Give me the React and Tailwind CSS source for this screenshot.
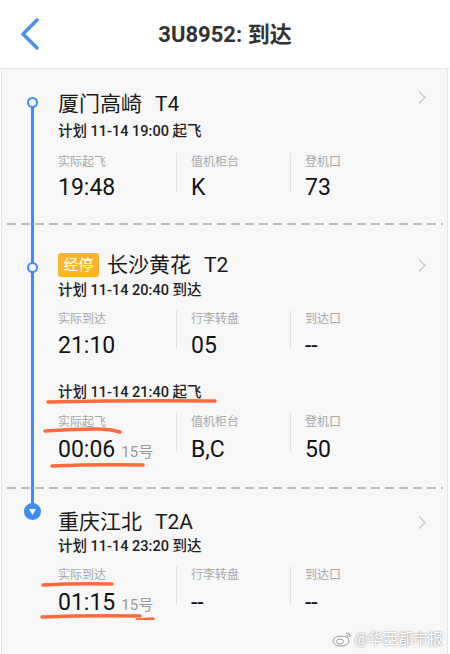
import React from "react";

// 航班详情：经停站时间线
const SEGMENT_1 = [
  { label: "实际起飞", value: "19:48" },
  { label: "值机柜台", value: "K" },
  { label: "登机口", value: "73" },
];

const SEGMENT_2A = [
  { label: "实际到达", value: "21:10" },
  { label: "行李转盘", value: "05" },
  { label: "到达口", value: "--" },
];

const SEGMENT_2B = [
  { label: "实际起飞", value: "00:06", day: "15号" },
  { label: "值机柜台", value: "B,C" },
  { label: "登机口", value: "50" },
];

const SEGMENT_3 = [
  { label: "实际到达", value: "01:15", day: "15号" },
  { label: "行李转盘", value: "--" },
  { label: "到达口", value: "--" },
];

const TitleRow = ({ name, term, tag, chevronClass = "" }) => (
  <div className="flex items-center h-[28px]">
    {tag && (
      <span className="mr-[8px] h-[24px] w-[41px] shrink-0 rounded-[3px] bg-[#fcb42c] text-white text-[15px] leading-[24px] text-center">
        {tag}
      </span>
    )}
    <span className="text-[21px] leading-[28px] text-[#1a1a1a]">{name}</span>
    <span className="ml-[13px] text-[21px] leading-[28px] text-[#1a1a1a]">{term}</span>
    <svg
      className={`ml-auto ${chevronClass}`}
      width="10"
      height="15"
      viewBox="0 0 10 15"
    >
      <polyline
        points="2,1.5 8,7.5 2,13.5"
        fill="none"
        stroke="#c9ced4"
        strokeWidth="1.5"
      />
    </svg>
  </div>
);

const Plan = ({ children, className = "" }) => (
  <p className={`text-[14.5px] leading-[20px] font-medium text-[#222] ${className}`}>
    {children}
  </p>
);

const InfoRow = ({ cols, className = "", valueGap = "mt-[3px]" }) => (
  <div className={`flex ${className}`}>
    {cols.map((c, i) => (
      <React.Fragment key={c.label}>
        {i > 0 && <div className="w-px h-[39px] bg-[#e2e2e2]" />}
        <div className={i === 0 ? "w-[118px]" : "w-[113px] pl-[14px]"}>
          <div className="text-[12px] leading-[18px] text-[#a8a8a8]">{c.label}</div>
          <div
            className={`${valueGap} flex items-baseline text-[23px] leading-[30px] text-[#141414]`}
          >
            {c.value}
            {c.day && (
              <span className="ml-[6px] text-[15px] text-[#9a9a9a]">{c.day}</span>
            )}
          </div>
        </div>
      </React.Fragment>
    ))}
  </div>
);

const Dashed = ({ className = "" }) => (
  <div
    className={`ml-[5px] mr-[4px] h-[2px] bg-[repeating-linear-gradient(90deg,#bdbdbd_0_9px,transparent_9px_14px)] ${className}`}
  />
);

const Marks = ({ children }) => (
  <svg
    className="absolute inset-0 z-20 pointer-events-none"
    width="100%"
    height="100%"
    fill="none"
    stroke="#ff6a3d"
    strokeWidth="3.5"
    strokeLinecap="round"
    strokeLinejoin="round"
  >
    {children}
  </svg>
);

export default function App() {
  return (
    <div className="w-[450px] h-[654px] overflow-hidden bg-white flex flex-col font-[family-name:Roboto,'Noto_Sans_CJK_SC',sans-serif]">
      {/* Header */}
      <header className="h-[69px] shrink-0 border-b border-[#e6e6e6] grid grid-cols-[64px_1fr_64px] items-center">
        <svg className="ml-[20px]" width="20" height="32" viewBox="0 0 20 32">
          <polyline
            points="17,2 3,16 17,30"
            fill="none"
            stroke="#4a8ff2"
            strokeWidth="3.5"
            strokeLinecap="round"
            strokeLinejoin="round"
          />
        </svg>
        <h1 className="text-center text-[22px] font-bold text-[#333]">3U8952: 到达</h1>
        <div />
      </header>

      <main className="relative flex-1 ml-[1px] mr-[2px] border-x border-[#e6e6e6] bg-[#f7f7f7]">
        {/* 出发站 */}
        <section className="relative pt-[21px]">
          <div className="absolute left-[29px] top-[34px] bottom-0 w-[3px] bg-[#3f8cf4] z-10" />
          <div className="absolute left-[25px] top-[28px] w-[11px] h-[11px] rounded-full border-[2.5px] border-[#3f8cf4] bg-[#f7f7f7] z-10" />
          <div className="pl-[56px] pr-[20px]">
            <TitleRow name="厦门高崎" term="T4" chevronClass="-translate-y-[7px]" />
            <Plan className="mt-[4px]">计划 11-14 19:00 起飞</Plan>
            <InfoRow cols={SEGMENT_1} className="mt-[11px]" valueGap="mt-[2px]" />
          </div>
          <Dashed className="mt-[20px]" />
        </section>

        {/* 经停站 */}
        <section className="relative pt-[26px]">
          <div className="absolute left-[29px] top-0 bottom-0 w-[3px] bg-[#3f8cf4] z-10" />
          <div className="absolute left-[25px] top-[37px] w-[11px] h-[11px] rounded-full border-[2.5px] border-[#3f8cf4] bg-[#f7f7f7] z-10" />
          <div className="pl-[56px] pr-[20px]">
            <TitleRow name="长沙黄花" term="T2" tag="经停" />
            <Plan className="mt-[2px]">计划 11-14 20:40 到达</Plan>
            <InfoRow cols={SEGMENT_2A} className="mt-[9px]" />
            <Plan className="mt-[22px]">计划 11-14 21:40 起飞</Plan>
            <InfoRow cols={SEGMENT_2B} className="mt-[10px]" valueGap="mt-[4px]" />
          </div>
          <Dashed className="mt-[20px]" />
          <Marks>
            <path d="M46 177 Q130 175 213 176" />
            <path d="M43 206 Q70 204 95 204 Q108 204 118 207" />
            <path d="M50 241 Q95 239 141 240" />
          </Marks>
        </section>

        {/* 到达站 */}
        <section className="relative pt-[19px]">
          <div className="absolute left-[29px] top-0 h-[23px] w-[3px] bg-[#3f8cf4] z-10" />
          <svg
            className="absolute left-[22px] top-[14px] z-10"
            width="17"
            height="17"
            viewBox="0 0 17 17"
          >
            <circle cx="8.5" cy="8.5" r="8.5" fill="#3f8cf4" />
            <polygon points="5,6 12,6 8.5,12" fill="#fff" />
          </svg>
          <div className="pl-[56px] pr-[20px]">
            <TitleRow name="重庆江北" term="T2A" />
            <Plan className="mt-[1px]">计划 11-14 23:20 到达</Plan>
            <InfoRow cols={SEGMENT_3} className="mt-[9px]" valueGap="mt-[4px]" />
          </div>
          <Marks>
            <path d="M41 96 Q75 94 110 95" />
            <path d="M40 128 Q90 126 138 127" />
            <path d="M135 131 L151 130" />
          </Marks>
        </section>

        {/* 水印 */}
        <div className="absolute right-[4px] bottom-[6px] flex items-center gap-[3px] text-white text-[15px] leading-[18px] [text-shadow:0_0_2px_rgba(0,0,0,0.55)]">
          <svg width="20" height="16" viewBox="0 0 20 16">
            <ellipse cx="9" cy="10" rx="8" ry="5" fill="#fff" stroke="#999" strokeWidth="1" />
            <ellipse cx="8" cy="10.5" rx="3.5" ry="2.5" fill="none" stroke="#999" strokeWidth="1" />
            <path d="M14 2 Q18 2 18 6" fill="none" stroke="#999" strokeWidth="1.2" />
            <path d="M14 4.5 Q16 4.5 16 6.5" fill="none" stroke="#999" strokeWidth="1.2" />
          </svg>
          <span>@华西都市报</span>
        </div>
      </main>
    </div>
  );
}
